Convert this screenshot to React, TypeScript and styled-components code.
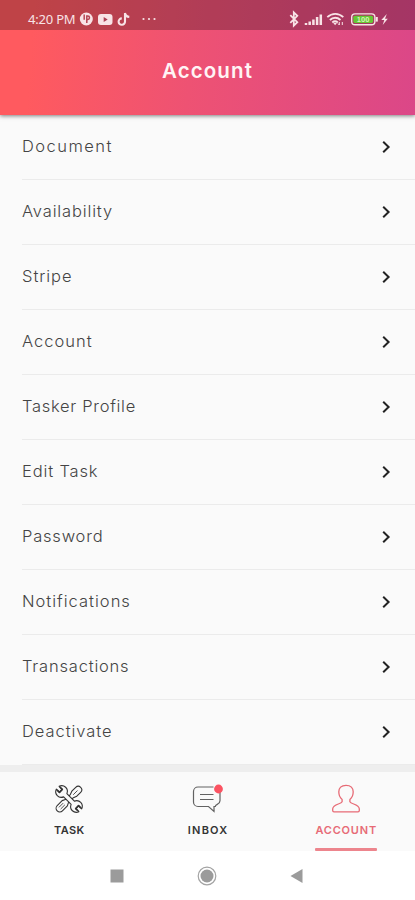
import React from "react";
import styled, { createGlobalStyle } from "styled-components";

const GlobalStyle = createGlobalStyle`
  *, *::before, *::after { box-sizing: border-box; }
  body { margin: 0; background: #ffffff; font-family: Inter, "Liberation Sans", sans-serif; }
`;

const Screen = styled.div`
  display: flex;
  flex-direction: column;
  height: 900px;
  overflow: hidden;
  background: #fafafa;
`;

const Header = styled.header`
  flex: none;
  height: 115px;
  position: relative;
  background: linear-gradient(94deg, #ff5a5f 0%, #ff5a5f 8%, #ee5273 46%, #db4788 100%);
  box-shadow: 0 1px 4px rgba(0, 0, 0, 0.5);
`;

const StatusBar = styled.div`
  display: flex;
  align-items: center;
  justify-content: space-between;
  height: 30px;
  padding: 8px 26px 0 28px;
  background: rgba(0, 0, 0, 0.25);
  color: #f8e3e6;
`;

const StatusGroup = styled.div`
  display: flex;
  align-items: center;
  svg { display: block; }
`;

const Clock = styled.span`
  width: 51px;
  font: 400 13px/16px "Noto Sans", sans-serif;
  letter-spacing: -0.2px;
  white-space: nowrap;
`;

const Title = styled.h1`
  margin: 0;
  padding-top: 27px;
  text-align: center;
  font-size: 20.5px;
  line-height: 27px;
  font-weight: 600;
  letter-spacing: 1.1px;
  color: #fff4f5;
`;

const Menu = styled.ul`
  flex: none;
  height: 650px;
  margin: 0;
  padding: 0 0 0 22px;
  list-style: none;
`;

const MenuRow = styled.li`
  display: flex;
  align-items: center;
  justify-content: space-between;
  height: 65px;
  padding: 0 23px 1px 0;
  border-bottom: 1px solid #ebebeb;
`;

const MenuLabel = styled.span<{ $tracking: number }>`
  padding-bottom: 1px;
  font-size: 16.5px;
  line-height: 22px;
  font-weight: 300;
  letter-spacing: ${(p) => p.$tracking}px;
  color: #444444;
`;

const TabBar = styled.nav`
  flex: none;
  display: grid;
  grid-template-columns: repeat(3, 1fr);
  height: 86px;
  border-top: 7px solid #eeeeee;
  background: #fafafa;
`;

const Tab = styled.div<{ $active?: boolean }>`
  display: flex;
  flex-direction: column;
  align-items: center;
  height: 79px;
  padding-top: 12px;
  color: ${(p) => (p.$active ? "#e76b76" : "#333333")};
  svg { display: block; overflow: visible; }
`;

const TabLabel = styled.span<{ $tracking: number }>`
  margin-top: 8px;
  font-size: 11px;
  line-height: 16px;
  font-weight: 600;
  letter-spacing: ${(p) => p.$tracking}px;
  margin-right: ${(p) => -p.$tracking}px;
`;

const ActiveLine = styled.span`
  width: 62px;
  height: 3px;
  margin-top: auto;
  border-radius: 1px;
  background: #ed858d;
`;

const SystemNav = styled.div`
  flex: 1;
  display: flex;
  justify-content: space-between;
  align-items: center;
  padding: 0 112px 0 110px;
  background: #ffffff;
  svg { display: block; }
`;

const items = [
  { label: "Document", tracking: 1.45 },
  { label: "Availability", tracking: 0.85 },
  { label: "Stripe", tracking: 0.95 },
  { label: "Account", tracking: 1 },
  { label: "Tasker Profile", tracking: 0.7 },
  { label: "Edit Task", tracking: 0.85 },
  { label: "Password", tracking: 0.8 },
  { label: "Notifications", tracking: 1 },
  { label: "Transactions", tracking: 0.8 },
  { label: "Deactivate", tracking: 0.95 },
];

const Chevron = () => (
  <svg width="12" height="14" viewBox="0 0 12 14" fill="none" stroke="#222" strokeWidth="2">
    <path d="M3.2 1.8 8.6 7 3.2 12.2" />
  </svg>
);

const NotificationIcons = () => (
  <svg width="80" height="16" viewBox="0 0 80 16" fill="currentColor">
    <circle cx="7.3" cy="8" r="6.5" />
    <path d="M5.2 3.6v5.2M7.8 12V5.1h1a1.7 1.7 0 0 1 0 3.4h-1" fill="none" stroke="#b54453" strokeWidth="1.5" />
    <rect x="19" y="3" width="14.5" height="11" rx="3" />
    <path d="m24.7 6 4 2.5-4 2.5z" fill="#ad4054" />
    <path d="M46 2v8.4a3.2 3.2 0 1 1-3.2-3M46 2c.3 2.4 1.7 3.7 4.3 3.9" fill="none" stroke="currentColor" strokeWidth="2.1" />
    <circle cx="64.5" cy="8" r="1.1" />
    <circle cx="70" cy="8" r="1.1" />
    <circle cx="75.5" cy="8" r="1.1" />
  </svg>
);

const BatteryLevel = styled.text`
  font: 700 7.5px "Liberation Sans", sans-serif;
`;

const DeviceIcons = () => (
  <svg width="101" height="18" viewBox="0 0 101 18" fill="none" stroke="currentColor">
    <path d="m2.3 5.2 7 7-3.5 3.5V2.3l3.5 3.5-7 7" strokeWidth="1.8" />
    <path d="M18 15v-2M21.7 15v-3.5M25.4 15V9.5M29.1 15V7M32.8 15V4.5" strokeWidth="2.5" />
    <g transform="translate(3.3 0)">
      <path d="M36 7.2c4.7-4.5 11.3-4.5 16 0M38.6 10c3-3 7.4-3 10.6 0M41 12.5c1.7-1.5 3.8-1.5 5.5 0" strokeWidth="1.8" />
      <path d="m41.8 12.8 2 2.5 2-2.5z" fill="currentColor" stroke="none" />
      <path d="M48 12v3m-1.2-1.4L48 15m3-3v3" strokeWidth="1" />
    </g>
    <g transform="translate(4.8 0)">
      <rect x="58.9" y="3.9" width="23.2" height="10.8" rx="3.3" strokeWidth="1.4" />
      <path d="M84 7v4.6" strokeWidth="2" />
      <rect x="60.5" y="5.7" width="19.8" height="7.2" rx="1.6" fill="#65c735" stroke="none" />
      <BatteryLevel x="64" y="12" fill="#d8f2b9" stroke="none">100</BatteryLevel>
      <path d="m94 4-5.5 6h3l-1.6 5L95 8.8h-2.8z" fill="currentColor" stroke="none" />
    </g>
  </svg>
);

const TaskIcon = () => (
  <svg width="30" height="30" viewBox="-15 -15 30 30" fill="#fafafa" stroke="currentColor" strokeWidth="1.1" strokeLinejoin="round">
    <g transform="rotate(45)">
      <path d="M-2.2-4-3.5-7.5V-13a3.5 3.5 0 0 1 7 0v5.5L2.2-4v7L3.7 6v7a3.7 3.7 0 0 1-7.4 0V6l1.5-3z" />
      <path d="M0-12v6M-1.2 7v6M1.2 7v6" strokeWidth=".8" />
    </g>
    <g transform="rotate(-45)">
      <path d="M-2-16v4.5h4V-16c5 2 5.3 8.6.3 10.7V5.3c5 2.1 4.7 8.7-.3 10.7v-4.5h-4V16c-5-2-5.3-8.6-.3-10.7V-5.3c-5-2.1-4.7-8.7.3-10.7z" />
      <path d="M-2-15v3.5h4V-15M-2 15v-3.5h4V15" fill="none" strokeWidth="1.7" />
    </g>
  </svg>
);

const InboxIcon = () => (
  <svg width="30" height="30" viewBox="0 1 30 30" fill="none" stroke="#626262" strokeWidth="1.2">
    <path d="M21.5 4H6A4.5 4.5 0 0 0 1.5 8.5V19A4.5 4.5 0 0 0 6 23.5h10.5l5.5 5v-5h1.3c0-2.7 4.7-1.5 4.7-5.7V9M8 11.5h13.5M8 16.5h13.5" />
    <circle cx="26.5" cy="6" r="4.4" fill="#fb5362" stroke="none" />
  </svg>
);

const AccountIcon = () => (
  <svg width="30" height="30" viewBox="0 1.5 30 31" preserveAspectRatio="none" fill="none" stroke="currentColor" strokeWidth="1.3" strokeLinejoin="round">
    <path d="M15 2.8c-4.8 0-7.2 2.8-7.2 6.8 0 3.2 1.2 6.2 3.3 8v2.2c-1.2 2.8-8.8 2.2-9.4 7.3v1.8c0 .7.5 1.3 1.3 1.3h24c.8 0 1.3-.6 1.3-1.3v-1.8c-.6-5.1-8.2-4.5-9.4-7.3v-2.2c2.1-1.8 3.3-4.8 3.3-8 0-4-2.4-6.8-7.2-6.8z" />
  </svg>
);

export default function App() {
  return (
    <>
      <GlobalStyle />
      <Screen>
        <Header>
          <StatusBar>
            <StatusGroup><Clock>4:20 PM</Clock><NotificationIcons /></StatusGroup>
            <StatusGroup><DeviceIcons /></StatusGroup>
          </StatusBar>
          <Title>Account</Title>
        </Header>
        <Menu>
          {items.map((item) => (
            <MenuRow key={item.label}>
              <MenuLabel $tracking={item.tracking}>{item.label}</MenuLabel>
              <Chevron />
            </MenuRow>
          ))}
        </Menu>
        <TabBar>
          <Tab><TaskIcon /><TabLabel $tracking={0.4}>TASK</TabLabel></Tab>
          <Tab><InboxIcon /><TabLabel $tracking={1.2}>INBOX</TabLabel></Tab>
          <Tab $active><AccountIcon /><TabLabel $tracking={0.8}>ACCOUNT</TabLabel><ActiveLine /></Tab>
        </TabBar>
        <SystemNav>
          <svg width="14" height="14" viewBox="0 0 14 14"><path d="M.5.5h13v13H.5z" fill="#9b9b9b" /></svg>
          <svg width="20" height="20" viewBox="0 0 20 20">
            <circle cx="10" cy="10" r="8.8" fill="none" stroke="#a3a3a3" strokeWidth="1.2" />
            <circle cx="10" cy="10" r="6.5" fill="#9b9b9b" />
          </svg>
          <svg width="13" height="14" viewBox="0 0 13 14"><path d="M12.5 0v14L.5 7z" fill="#9b9b9b" /></svg>
        </SystemNav>
      </Screen>
    </>
  );
}
